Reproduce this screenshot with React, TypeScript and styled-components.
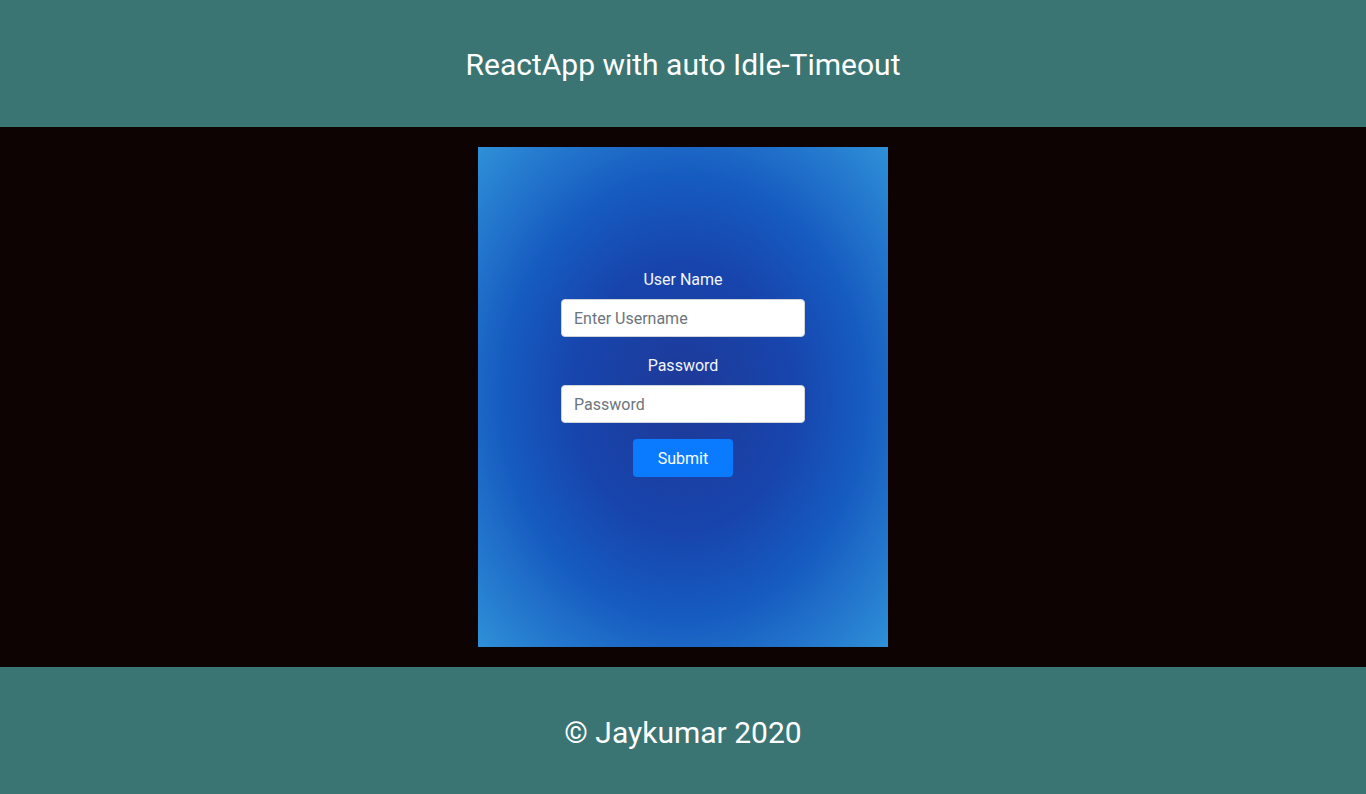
import React from "react";
import styled, { createGlobalStyle } from "styled-components";

const GlobalStyle = createGlobalStyle`
  * {
    box-sizing: border-box;
  }

  body {
    margin: 0;
    font-family: Roboto, "Liberation Sans", sans-serif;
    background-color: #0d0302;
  }
`;

const Page = styled.div`
  display: flex;
  flex-direction: column;
  min-height: 794px;
`;

const Bar = styled.div<{ $shift: number }>`
  display: flex;
  align-items: center;
  justify-content: center;
  height: 127px;
  padding-top: ${(p) => p.$shift}px;
  background-color: #3a7574;
  color: #ffffff;
  font-size: 30px;
`;

const Main = styled.main`
  display: flex;
  justify-content: center;
  padding: 20px 0;
  background-color: #0d0302;
`;

const LoginCard = styled.form`
  display: flex;
  flex-direction: column;
  align-items: center;
  width: 410px;
  height: 500px;
  padding-top: 121px;
  background: radial-gradient(
    ellipse at center,
    #1f3997 0%,
    #1745ad 38%,
    #165bc0 62%,
    #2f90d8 100%
  );
`;

const FieldLabel = styled.label<{ $space?: number }>`
  color: #f2f4fa;
  font-size: 16px;
  line-height: 24px;
  margin-top: ${(p) => p.$space ?? 0}px;
  margin-bottom: 7px;
`;

const TextInput = styled.input`
  width: 244px;
  height: 38px;
  padding: 6px 12px;
  margin-bottom: 16px;
  border: 1px solid #ced4da;
  border-radius: 4px;
  background: #ffffff;
  font-family: inherit;
  font-size: 16px;
  color: #495057;

  &::placeholder {
    color: #6c757d;
  }
`;

const SubmitButton = styled.button`
  width: 100px;
  height: 38px;
  border: none;
  border-radius: 4px;
  background-color: #0a7bff;
  color: #ffffff;
  font-family: inherit;
  font-size: 16px;
`;

export default function App() {
  return (
    <Page>
      <GlobalStyle />
      <Bar $shift={2}>ReactApp with auto Idle-Timeout</Bar>
      <Main>
        <LoginCard onSubmit={(e) => e.preventDefault()}>
          <FieldLabel htmlFor="username">User Name</FieldLabel>
          <TextInput id="username" type="text" placeholder="Enter Username" />
          <FieldLabel htmlFor="password" $space={1}>
            Password
          </FieldLabel>
          <TextInput id="password" type="password" placeholder="Password" />
          <SubmitButton type="submit">Submit</SubmitButton>
        </LoginCard>
      </Main>
      <Bar $shift={3}>© Jaykumar 2020</Bar>
    </Page>
  );
}
